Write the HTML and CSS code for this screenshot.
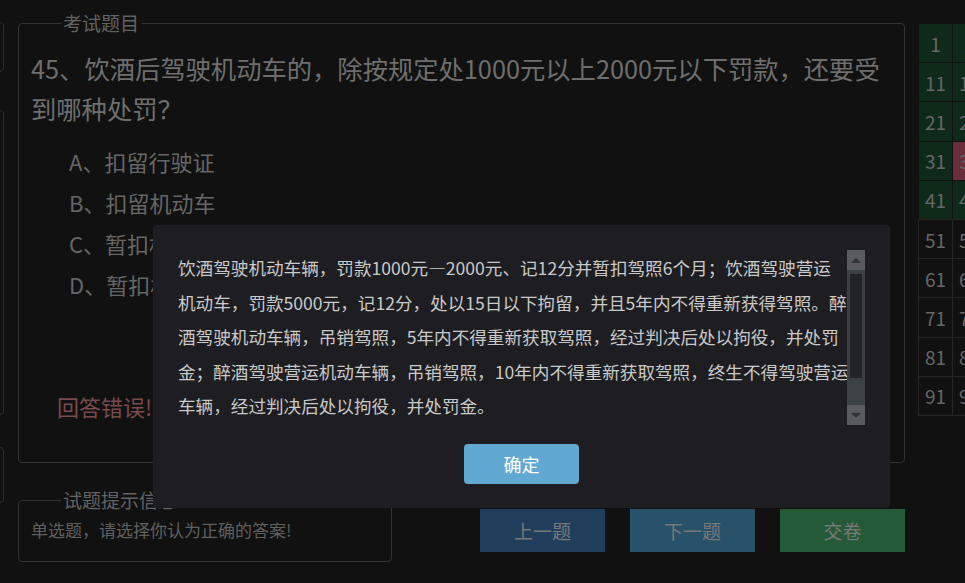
FILE: index.html
```html
<!DOCTYPE html>
<html lang="zh-CN">
<head>
<meta charset="utf-8">
<title>考试</title>
<link rel="stylesheet" href="styles.css">
</head>
<body>
<div class="page">
  <div class="side">
    <div class="side-box b1"></div>
    <div class="side-box b2"></div>
    <div class="side-box b3"></div>
  </div>

  <div class="main">
    <fieldset class="exam">
      <legend>考试题目</legend>
      <div class="question">45、饮酒后驾驶机动车的，除按规定处1000元以上2000元以下罚款，还要受到哪种处罚？</div>
      <ul class="options">
        <li>A、扣留行驶证</li>
        <li>B、扣留机动车</li>
        <li>C、暂扣机动车驾驶证</li>
        <li>D、暂扣机动车行驶证</li>
      </ul>
      <div class="result">回答错误!</div>
    </fieldset>

    <div class="bottom">
      <fieldset class="hint">
        <legend>试题提示信息</legend>
        <div class="hint-text">单选题，请选择你认为正确的答案!</div>
      </fieldset>
      <div class="actions">
        <button class="btn prev">上一题</button>
        <button class="btn next">下一题</button>
        <button class="btn submit">交卷</button>
      </div>
    </div>
  </div>

  <div class="grid">
    <div class="cell ok">1</div><div class="cell ok">2</div><div class="cell ok">3</div><div class="cell ok">4</div><div class="cell ok">5</div><div class="cell ok">6</div><div class="cell ok">7</div><div class="cell ok">8</div><div class="cell ok">9</div><div class="cell ok">10</div>
    <div class="cell ok">11</div><div class="cell ok">12</div><div class="cell ok">13</div><div class="cell ok">14</div><div class="cell ok">15</div><div class="cell ok">16</div><div class="cell ok">17</div><div class="cell ok">18</div><div class="cell ok">19</div><div class="cell ok">20</div>
    <div class="cell ok">21</div><div class="cell ok">22</div><div class="cell ok">23</div><div class="cell ok">24</div><div class="cell ok">25</div><div class="cell ok">26</div><div class="cell ok">27</div><div class="cell ok">28</div><div class="cell ok">29</div><div class="cell ok">30</div>
    <div class="cell ok">31</div><div class="cell bad">32</div><div class="cell ok">33</div><div class="cell ok">34</div><div class="cell ok">35</div><div class="cell ok">36</div><div class="cell ok">37</div><div class="cell ok">38</div><div class="cell ok">39</div><div class="cell ok">40</div>
    <div class="cell ok">41</div><div class="cell ok">42</div><div class="cell ok">43</div><div class="cell ok">44</div><div class="cell bad">45</div><div class="cell">46</div><div class="cell">47</div><div class="cell">48</div><div class="cell">49</div><div class="cell">50</div>
    <div class="cell">51</div><div class="cell">52</div><div class="cell">53</div><div class="cell">54</div><div class="cell">55</div><div class="cell">56</div><div class="cell">57</div><div class="cell">58</div><div class="cell">59</div><div class="cell">60</div>
    <div class="cell">61</div><div class="cell">62</div><div class="cell">63</div><div class="cell">64</div><div class="cell">65</div><div class="cell">66</div><div class="cell">67</div><div class="cell">68</div><div class="cell">69</div><div class="cell">70</div>
    <div class="cell">71</div><div class="cell">72</div><div class="cell">73</div><div class="cell">74</div><div class="cell">75</div><div class="cell">76</div><div class="cell">77</div><div class="cell">78</div><div class="cell">79</div><div class="cell">80</div>
    <div class="cell">81</div><div class="cell">82</div><div class="cell">83</div><div class="cell">84</div><div class="cell">85</div><div class="cell">86</div><div class="cell">87</div><div class="cell">88</div><div class="cell">89</div><div class="cell">90</div>
    <div class="cell">91</div><div class="cell">92</div><div class="cell">93</div><div class="cell">94</div><div class="cell">95</div><div class="cell">96</div><div class="cell">97</div><div class="cell">98</div><div class="cell">99</div><div class="cell">100</div>
  </div>
</div>

<div class="modal">
  <div class="modal-body">
    <div class="modal-text">饮酒驾驶机动车辆，罚款1000元—2000元、记12分并暂扣驾照6个月；饮酒驾驶营运<br>机动车，罚款5000元，记12分，处以15日以下拘留，并且5年内不得重新获得驾照。醉<br>酒驾驶机动车辆，吊销驾照，5年内不得重新获取驾照，经过判决后处以拘役，并处罚<br>金；醉酒驾驶营运机动车辆，吊销驾照，10年内不得重新获取驾照，终生不得驾驶营运<br>车辆，经过判决后处以拘役，并处罚金。</div>
    <div class="scrollbar">
      <div class="sb-btn"><span class="arrow up"></span></div>
      <div class="sb-track"><div class="sb-thumb"></div></div>
      <div class="sb-btn"><span class="arrow down"></span></div>
    </div>
  </div>
  <div class="modal-foot">
    <button class="ok-btn">确定</button>
  </div>
</div>
</body>
</html>
```

FILE: styles.css
```css
html, body {
  margin: 0;
  padding: 0;
  overflow: hidden;
  background: #111111;
}
body {
  width: 965px;
  height: 583px;
  font-family: "Noto Sans CJK SC", "Noto Sans", sans-serif;
  color: #6a6a6a;
  position: relative;
}
.page {
  display: flex;
  align-items: flex-start;
  gap: 13px;
}
.side {
  width: 5px;
  flex: none;
  overflow: hidden;
  display: flex;
  flex-direction: column;
}
.side-box {
  width: 40px;
  margin-left: -36px;
  box-sizing: border-box;
  border: 1px solid #2c2c2c;
  border-radius: 4px;
}
.b1 { margin-top: 22px; height: 50px; }
.b2 { margin-top: 38px; height: 305px; }
.b3 { margin-top: 32px; height: 56px; }

.main {
  width: 887px;
  flex: none;
  margin-top: 11px;
  display: flex;
  flex-direction: column;
}
fieldset {
  margin: 0;
  border: 1px solid #333333;
  border-radius: 4px;
  box-sizing: border-box;
}
legend {
  margin-left: 30px;
  padding: 0 2px;
  font-size: 19px;
  line-height: 24px;
  color: #626262;
}
.exam {
  height: 452px;
  padding: 0 12px;
}
.question {
  margin-top: 13px;
  font-size: 25.3px;
  line-height: 40px;
  color: #6e6e6e;
}
.options {
  list-style: none;
  margin: 13px 0 0;
  padding: 0 0 0 38px;
  font-size: 22px;
  line-height: 41px;
  color: #666666;
}
.result {
  margin-top: 86px;
  padding-left: 26px;
  font-size: 22px;
  line-height: 30px;
  color: #7a4a4e;
}
.bottom {
  margin-top: 25px;
  display: flex;
  justify-content: space-between;
  align-items: flex-start;
}
.hint {
  width: 374px;
  padding: 0 12px 19px;
}
.hint-text {
  margin-top: 6px;
  font-size: 17px;
  line-height: 24px;
  color: #5f5f5f;
}
.actions {
  margin-top: 21px;
  display: flex;
  gap: 25px;
}
.btn {
  width: 125px;
  height: 43px;
  border: none;
  padding: 0;
  font-family: inherit;
  font-size: 19px;
  color: #787878;
}
.prev { background: #213f5d; }
.next { background: #28516a; }
.submit { background: #245a37; }

.grid {
  flex: none;
  margin-top: 23px;
  display: grid;
  grid-template-columns: repeat(10, 34px);
  grid-auto-rows: 39.2px;
}
.cell {
  box-sizing: border-box;
  border: 1px solid #252525;
  margin: 0 -1px -1px 0;
  font-size: 19px;
  color: #666666;
  display: flex;
  align-items: center;
  justify-content: center;
}
.cell.ok {
  background: #0f2a19;
  border-color: #111111;
}
.cell.bad {
  background: #6a2d3a;
  border-color: #111111;
}

.modal {
  position: absolute;
  left: 153px;
  top: 225px;
  width: 737px;
  height: 283px;
  box-sizing: border-box;
  padding: 25px 25px 24px;
  background: #1e1e22;
  border-radius: 4px;
  display: flex;
  flex-direction: column;
}
.modal-body {
  display: flex;
  height: 175px;
}
.modal-text {
  flex: 1;
  font-size: 17.6px;
  line-height: 34.5px;
  color: #c9c9c9;
  white-space: nowrap;
  overflow: hidden;
  margin-top: 1px;
}
.scrollbar {
  width: 18px;
  flex: none;
  display: flex;
  flex-direction: column;
  background: #3d4245;
}
.sb-btn {
  height: 20px;
  flex: none;
  background: #5a5b5d;
  display: flex;
  align-items: center;
  justify-content: center;
}
.arrow {
  width: 0;
  height: 0;
  border-left: 5px solid transparent;
  border-right: 5px solid transparent;
}
.arrow.up { border-bottom: 5px solid #2f3032; }
.arrow.down { border-top: 5px solid #2f3032; }
.sb-track {
  flex: 1;
  padding-top: 2px;
}
.sb-thumb {
  height: 108px;
  box-sizing: border-box;
  margin: 0 1px;
  background: #222326;
  border: 2px solid #3b3f43;
}
.modal-foot {
  margin-top: 19px;
  display: flex;
  justify-content: center;
}
.ok-btn {
  width: 115px;
  height: 40px;
  border: none;
  border-radius: 4px;
  background: #61a9d3;
  color: #ffffff;
  font-family: inherit;
  font-size: 18px;
  padding: 0;
}
```
